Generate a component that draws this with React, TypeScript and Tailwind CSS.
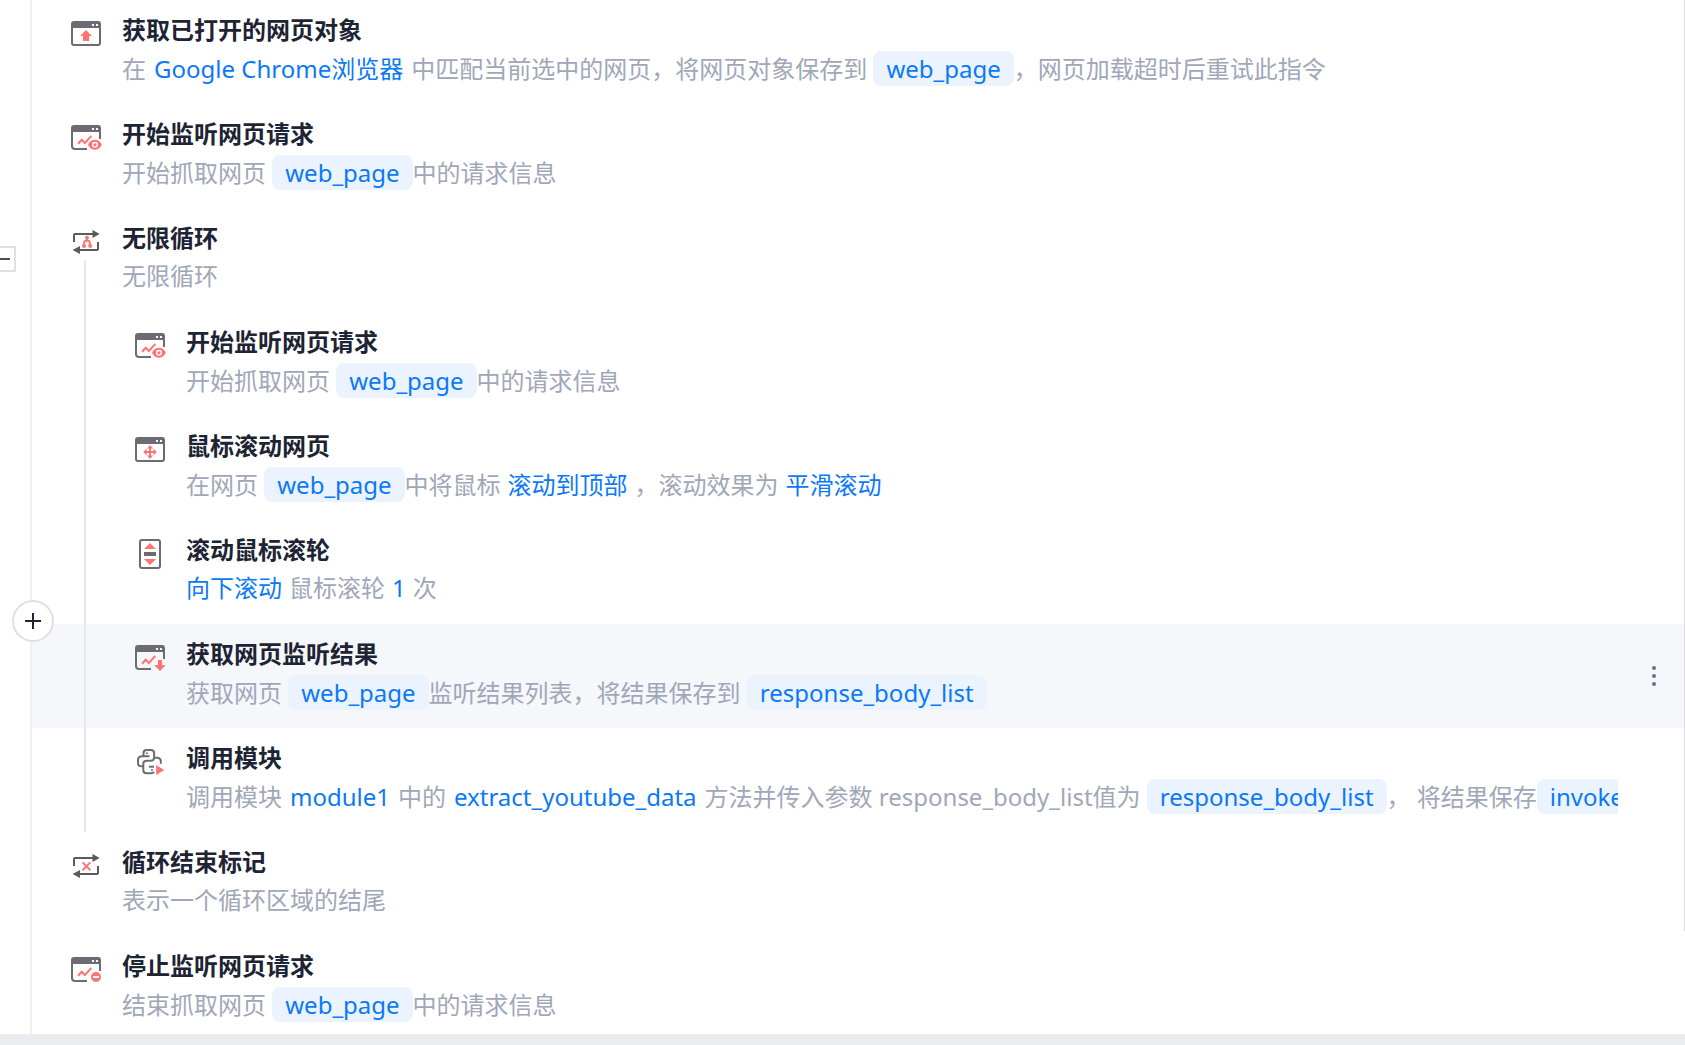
import { ReactNode } from 'react'

const GRAY = "#6c6b74";
const DARK = "#5b5b5b";
const RED = "#ff7373";

const Icon = ({ children }: { children: ReactNode }) => (
  <svg viewBox="0 0 32 32" fill="none" className="mt-[18px] h-8 w-8 shrink-0" aria-hidden="true">
    {children}
  </svg>
)

// Browser window, "frame" is the outline below the title bar
const Window = ({ frame }: { frame: string }) => (
  <>
    <path d={frame} stroke={GRAY} strokeWidth="2" />
    <path
      d="M4 3h24a3 3 0 0 1 3 3v4H1V6a3 3 0 0 1 3-3ZM22 6v2h2V6ZM26 6v2h2V6Z"
      fill={GRAY}
      fillRule="evenodd"
    />
  </>
)

const FULL_FRAME = "M2 8v17a2 2 0 0 0 2 2h24a2 2 0 0 0 2-2V8";
const CUT_FRAME = "M30 8v9M2 8v16a3 3 0 0 0 3 3h12";

const Chart = () => (
  <path d="M8 21.7l3.7-4 3.2 3.3 6.4-7.2" stroke={RED} strokeWidth="2" />
)

const OpenPageIcon = () => (
  <Icon>
    <Window frame={FULL_FRAME} />
    <path d="M16 12l6 6h-3v5h-6v-5h-3Z" fill={RED} />
  </Icon>
)

const ListenIcon = () => (
  <Icon>
    <Window frame={CUT_FRAME} />
    <Chart />
    <path d="M18 22.8c1.5-3.4 4-5 6.9-5s5.4 1.6 6.9 5c-1.5 3.4-4 5-6.9 5s-5.4-1.6-6.9-5Z" fill={RED} />
    <circle cx="25" cy="22.8" r="2.3" stroke="#fff" strokeWidth="1.4" />
  </Icon>
)

const StopListenIcon = () => (
  <Icon>
    <Window frame={CUT_FRAME} />
    <Chart />
    <circle cx="26" cy="23" r="5" fill={RED} />
    <path d="M23 23h6" stroke="#fff" strokeWidth="2" />
  </Icon>
)

const ResultIcon = () => (
  <Icon>
    <Window frame={CUT_FRAME} />
    <Chart />
    <path d="M24 18h4v5h3.7L26 29l-5.7-6H24Z" fill={RED} />
  </Icon>
)

const ScrollPageIcon = () => (
  <Icon>
    <Window frame={FULL_FRAME} />
    <path d="M16 13v10M11 18h10" stroke={RED} strokeWidth="2" />
    <path
      d="M16 11.2l3.2 3.3h-6.4ZM16 24.8l3.2-3.3h-6.4ZM9.2 18l3.3-3.2v6.4ZM22.8 18l-3.3-3.2v6.4Z"
      fill={RED}
    />
  </Icon>
)

const WheelIcon = () => (
  <Icon>
    <rect x="6" y="2" width="20" height="28" rx="2" stroke={GRAY} strokeWidth="2" />
    <path d="M16 5l6 6H10ZM16 27l6-6H10Z" fill={RED} />
    <path d="M10 16h12" stroke={GRAY} strokeWidth="4" />
  </Icon>
)

const LoopArrows = () => (
  <>
    <path d="M4 16V9a1 1 0 0 1 1-1h18M28 16v7a1 1 0 0 1-1 1H9" stroke={DARK} strokeWidth="2" />
    <path d="M22.5 4l7.2 4-7.2 4ZM10 20l-7.4 4 7.4 4Z" fill={DARK} />
  </>
)

const LoopIcon = () => (
  <Icon>
    <LoopArrows />
    <path d="M17 12v3M14.2 20v-3.5c0-1 .8-1.7 1.8-1.7h2c1 0 1.8.7 1.8 1.7V20" stroke={RED} strokeWidth="2" />
    <circle cx="17" cy="11.8" r="2" fill={RED} />
    <circle cx="14" cy="20" r="2" fill={RED} />
    <circle cx="20.2" cy="20" r="2" fill={RED} />
  </Icon>
)

const LoopEndIcon = () => (
  <Icon>
    <LoopArrows />
    <path d="M12.6 12.4l7.8 7.8M20.4 12.4l-7.8 7.8" stroke={RED} strokeWidth="2" />
  </Icon>
)

const PythonIcon = () => (
  <Icon>
    <g stroke={GRAY} strokeWidth="2">
      <path d="M15.5 10.3H8c-2.6 0-4 1.4-4 3.8v2.6C4 19 5.2 20.3 7.5 20.3H9" />
      <path d="M9.5 10.3V7c0-2 1.3-3 3.3-3h4c2 0 3.3 1 3.3 3v4.6c0 2-1.3 3.2-3.3 3.2h-4c-2.2 0-3.5 1.2-3.5 3.3v6.1c0 2 1.3 3 3.3 3H17c1.5 0 2.5-.4 3-1.2" />
      <path d="M20.5 11.8H23c2.5 0 3.8 1.3 3.8 3.7v2.3" />
      <path d="M15 20.7h5" />
    </g>
    <circle cx="12.8" cy="7.2" r="1" fill={GRAY} />
    <circle cx="18" cy="24" r="1" fill={GRAY} />
    <path d="M22.2 19l8 5-8 5Z" fill={RED} />
  </Icon>
)

const Chip = ({ children }: { children: ReactNode }) => (
  <button type="button" className="h-[35px] shrink-0 rounded-lg bg-[#ebf3ff] px-[13px] leading-[35px] text-[#0b79f7]">
    {children}
  </button>
)

const Param = ({ children }: { children: ReactNode }) => (
  <a href="#" className="mx-[7px] text-[#0b79f7] first:ml-0">{children}</a>
)

// Application, module and function names
const Name = ({ children }: { children: ReactNode }) => (
  <a href="#" className="mx-2 text-[#0b79f7]">{children}</a>
)

const Step = ({
  icon,
  title,
  nested = false,
  active = false,
  children
}: {
  icon: ReactNode;
  title: string;
  nested?: boolean;
  active?: boolean;
  children: ReactNode;
}) => (
  <div
    className={`flex h-[104px] pr-[67px] ${nested ? "pl-[102px]" : "pl-[38px]"} ${active ? "relative bg-[#f5f7fb]" : ""}`}
  >
    {icon}
    <div className="ml-5 min-w-0 flex-1 pt-[14px]">
      <h3 className="h-[37px] text-2xl leading-8 font-bold text-[#1d2433]">{title}</h3>
      <div className="flex min-h-[34px] items-center overflow-hidden text-2xl leading-8 whitespace-pre text-[#a0a7b8]">
        {children}
      </div>
    </div>
    {active && (
      <button
        type="button"
        aria-label="更多"
        className="absolute top-9 right-[15px] flex h-8 w-8 items-center justify-center text-[#667085]"
      >
        <svg viewBox="0 0 4 20" fill="currentColor" className="h-5 w-1">
          <circle cx="2" cy="2" r="2" />
          <circle cx="2" cy="10" r="2" />
          <circle cx="2" cy="18" r="2" />
        </svg>
      </button>
    )}
  </div>
)

export default function App() {
  return (
    <div
      lang="zh-CN"
      className="flex h-screen flex-col overflow-hidden bg-white font-['Noto_Sans','Noto_Sans_CJK_SC',sans-serif]"
    >
      <main className="relative flex min-h-0 flex-1 overflow-hidden">
        {/* Gutter */}
        <aside className="w-8 shrink-0 border-r-2 border-[#f0f0f5]">
          <button
            type="button"
            aria-label="折叠"
            className="absolute top-[246px] -left-[10px] flex h-[26px] w-[26px] items-center justify-end border-2 border-[#e0e0e0] bg-white pr-1"
          >
            <span className="h-[2px] w-4 bg-[#4d4d4d]" />
          </button>
          <button
            type="button"
            aria-label="添加指令"
            className="absolute top-[600px] left-3 z-10 flex h-[42px] w-[42px] items-center justify-center rounded-full border-2 border-[#e0e0e0] bg-white"
          >
            <svg viewBox="0 0 16 16" stroke="#1d2433" strokeWidth="2" className="h-4 w-4">
              <path d="M8 0v16M0 8h16" />
            </svg>
          </button>
        </aside>

        {/* Steps */}
        <section className="min-w-0 flex-1">
          <Step icon={<OpenPageIcon />} title="获取已打开的网页对象">
            <span>在</span>
            <Name>Google Chrome浏览器</Name>
            <span>中匹配当前选中的网页，将网页对象保存到 </span>
            <Chip>web_page</Chip>
            <span>，网页加载超时后重试此指令</span>
          </Step>
          <Step icon={<ListenIcon />} title="开始监听网页请求">
            <span>开始抓取网页 </span>
            <Chip>web_page</Chip>
            <span>中的请求信息</span>
          </Step>

          {/* Loop body */}
          <div className="relative">
            <Step icon={<LoopIcon />} title="无限循环">
              <span>无限循环</span>
            </Step>
            <Step nested icon={<ListenIcon />} title="开始监听网页请求">
              <span>开始抓取网页 </span>
              <Chip>web_page</Chip>
              <span>中的请求信息</span>
            </Step>
            <Step nested icon={<ScrollPageIcon />} title="鼠标滚动网页">
              <span>在网页 </span>
              <Chip>web_page</Chip>
              <span>中将鼠标</span>
              <Param>滚动到顶部</Param>
              <span>，滚动效果为</span>
              <Param>平滑滚动</Param>
            </Step>
            <Step nested icon={<WheelIcon />} title="滚动鼠标滚轮">
              <Param>向下滚动</Param>
              <span>鼠标滚轮</span>
              <Param>1</Param>
              <span>次</span>
            </Step>
            <Step nested active icon={<ResultIcon />} title="获取网页监听结果">
              <span>获取网页 </span>
              <Chip>web_page</Chip>
              <span>监听结果列表，将结果保存到 </span>
              <Chip>response_body_list</Chip>
            </Step>
            <Step nested icon={<PythonIcon />} title="调用模块">
              <span>调用模块</span>
              <Name>module1</Name>
              <span>中的</span>
              <Name>extract_youtube_data</Name>
              <span>方法并传入参数 response_body_list值为 </span>
              <Chip>response_body_list</Chip>
              <span>， 将结果保存</span>
              <Chip>invoke_result</Chip>
            </Step>
            <div className="absolute top-[52px] bottom-0 left-[52px] w-[2px] bg-[#e8e8ee]" />
          </div>

          <Step icon={<LoopEndIcon />} title="循环结束标记">
            <span>表示一个循环区域的结尾</span>
          </Step>
          <Step icon={<StopListenIcon />} title="停止监听网页请求">
            <span>结束抓取网页 </span>
            <Chip>web_page</Chip>
            <span>中的请求信息</span>
          </Step>
        </section>

        {/* Scrollbar thumb */}
        <div className="absolute top-0 right-0 h-[90%] w-px rounded-b bg-[#dcdce0]" />
      </main>
      <footer className="h-[11px] shrink-0 bg-[#ebecf0]" />
    </div>
  )
}
